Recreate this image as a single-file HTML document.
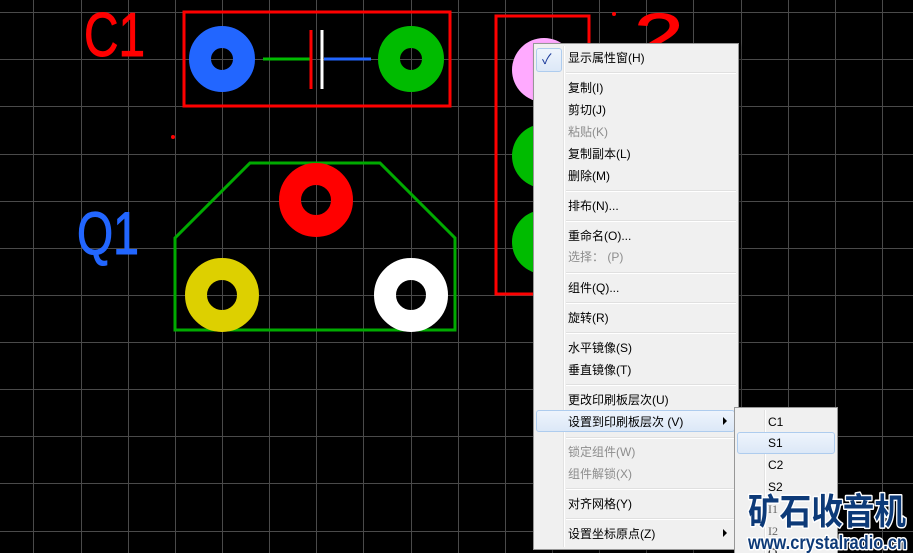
<!DOCTYPE html>
<html><head><meta charset="utf-8"><style>
html,body{margin:0;padding:0;width:913px;height:553px;overflow:hidden;}
body{background:#000;position:relative;font-family:"Liberation Sans","Noto Sans CJK SC",sans-serif;}
svg.bg{position:absolute;left:0;top:0;}
.menu{position:absolute;left:533px;top:43px;width:204px;height:505px;background:#f0f0f0;border:1px solid #979797;box-shadow:2px 2px 3px rgba(0,0,0,.5);}
.menu .gut{position:absolute;left:29px;top:2px;bottom:2px;width:1px;background:#e2e2e2;border-right:1px solid #fff;}
.it{position:absolute;left:34px;font-size:12px;color:#000;line-height:14px;white-space:nowrap;}
.dis{color:#8d8d8d;}
.sep{position:absolute;left:32px;right:2px;height:1px;background:#e0e0e0;border-bottom:1px solid #fff;}
.hl{position:absolute;border:1px solid #aeccee;border-radius:3px;background:linear-gradient(#eef4fc,#dce8f7);}
.sub{position:absolute;left:734px;top:407px;width:102px;height:146px;background:#f0f0f0;border:1px solid #979797;border-bottom:none;overflow:hidden;}
.sit{position:absolute;left:33px;font-size:12px;line-height:14px;color:#000;font-family:"Liberation Sans",sans-serif;}
svg.wm{position:absolute;left:0;top:0;}
</style></head><body>
<svg class="bg" width="913" height="553">
<g stroke="#4a4a4a" stroke-width="1">
<line x1="33.5" y1="0" x2="33.5" y2="553"/><line x1="81.5" y1="0" x2="81.5" y2="553"/><line x1="128.5" y1="0" x2="128.5" y2="553"/><line x1="175.5" y1="0" x2="175.5" y2="553"/><line x1="222.5" y1="0" x2="222.5" y2="553"/><line x1="269.5" y1="0" x2="269.5" y2="553"/><line x1="316.5" y1="0" x2="316.5" y2="553"/><line x1="363.5" y1="0" x2="363.5" y2="553"/><line x1="411.5" y1="0" x2="411.5" y2="553"/><line x1="458.5" y1="0" x2="458.5" y2="553"/><line x1="505.5" y1="0" x2="505.5" y2="553"/><line x1="552.5" y1="0" x2="552.5" y2="553"/><line x1="599.5" y1="0" x2="599.5" y2="553"/><line x1="646.5" y1="0" x2="646.5" y2="553"/><line x1="693.5" y1="0" x2="693.5" y2="553"/><line x1="741.5" y1="0" x2="741.5" y2="553"/><line x1="788.5" y1="0" x2="788.5" y2="553"/><line x1="835.5" y1="0" x2="835.5" y2="553"/><line x1="882.5" y1="0" x2="882.5" y2="553"/>
<line x1="0" y1="12.5" x2="913" y2="12.5"/><line x1="0" y1="59.5" x2="913" y2="59.5"/><line x1="0" y1="106.5" x2="913" y2="106.5"/><line x1="0" y1="154.5" x2="913" y2="154.5"/><line x1="0" y1="201.5" x2="913" y2="201.5"/><line x1="0" y1="248.5" x2="913" y2="248.5"/><line x1="0" y1="295.5" x2="913" y2="295.5"/><line x1="0" y1="342.5" x2="913" y2="342.5"/><line x1="0" y1="389.5" x2="913" y2="389.5"/><line x1="0" y1="436.5" x2="913" y2="436.5"/><line x1="0" y1="483.5" x2="913" y2="483.5"/><line x1="0" y1="531.5" x2="913" y2="531.5"/>
</g>
<text x="84" y="56" font-family="Liberation Sans" font-size="62" fill="#ff0000" stroke="#ff0000" stroke-width="1" textLength="61" lengthAdjust="spacingAndGlyphs">C1</text>
<rect x="184" y="12" width="266" height="94" fill="none" stroke="#ff0000" stroke-width="3"/>
<line x1="263" y1="59" x2="310" y2="59" stroke="#00bb00" stroke-width="3"/>
<line x1="324" y1="59" x2="371" y2="59" stroke="#2266ff" stroke-width="3"/>
<line x1="311" y1="30" x2="311" y2="89" stroke="#ff0000" stroke-width="3"/>
<line x1="322" y1="30" x2="322" y2="89" stroke="#ffffff" stroke-width="3"/>
<circle cx="222" cy="59" r="22" fill="none" stroke="#2266ff" stroke-width="22"/>
<circle cx="411" cy="59" r="22" fill="none" stroke="#00bb00" stroke-width="22"/>
<circle cx="173" cy="137" r="2" fill="#ff0000"/>
<polygon points="175,330 175,238 250,163 380,163 455,238 455,330" fill="none" stroke="#00aa00" stroke-width="3"/>
<circle cx="316" cy="200" r="26" fill="none" stroke="#ff0000" stroke-width="22"/>
<circle cx="222" cy="295" r="26" fill="none" stroke="#ddd000" stroke-width="22"/>
<circle cx="411" cy="295" r="26" fill="none" stroke="#ffffff" stroke-width="22"/>
<text x="77" y="254" font-family="Liberation Sans" font-size="60" fill="#2266ff" stroke="#2266ff" stroke-width="1" textLength="62" lengthAdjust="spacingAndGlyphs">Q1</text>
<rect x="496" y="16" width="93" height="278" fill="none" stroke="#ff0000" stroke-width="3"/>
<circle cx="544" cy="70" r="32" fill="#ffaaff"/>
<circle cx="544" cy="156" r="32" fill="#00bb00"/>
<circle cx="544" cy="242" r="32" fill="#00bb00"/>
<circle cx="614" cy="14" r="2" fill="#ff0000"/>
<text transform="translate(634,58) scale(1.4,1)" font-family="Liberation Sans" font-size="64" fill="#ff0000" stroke="#ff0000" stroke-width="1">2</text>
</svg>
<div class="menu">
<div class="gut"></div>
<div class="hl" style="left:2px;top:4px;width:24px;height:22px;"></div>
<div style="position:absolute;left:8px;top:5px;font-size:14px;color:#1a3a9a;">✓</div>
<div class="it" style="top:7px">显示属性窗(H)</div>
<div class="sep" style="top:28px"></div>
<div class="it" style="top:37px">复制(I)</div>
<div class="it" style="top:59px">剪切(J)</div>
<div class="it dis" style="top:81px">粘贴(K)</div>
<div class="it" style="top:103px">复制副本(L)</div>
<div class="it" style="top:125px">删除(M)</div>
<div class="sep" style="top:146px"></div>
<div class="it" style="top:155px">排布(N)...</div>
<div class="sep" style="top:176px"></div>
<div class="it" style="top:185px">重命名(O)...</div>
<div class="it dis" style="top:206px">选择： (P)</div>
<div class="sep" style="top:228px"></div>
<div class="it" style="top:237px">组件(Q)...</div>
<div class="sep" style="top:258px"></div>
<div class="it" style="top:267px">旋转(R)</div>
<div class="sep" style="top:288px"></div>
<div class="it" style="top:297px">水平镜像(S)</div>
<div class="it" style="top:319px">垂直镜像(T)</div>
<div class="sep" style="top:340px"></div>
<div class="it" style="top:349px">更改印刷板层次(U)</div>
<div class="hl" style="left:2px;top:366px;width:197px;height:20px;"></div>
<div class="it" style="top:371px">设置到印刷板层次 (V)</div>
<div style="position:absolute;left:189px;top:373px;width:0;height:0;border-left:4px solid #000;border-top:4px solid transparent;border-bottom:4px solid transparent;"></div>
<div class="sep" style="top:393px"></div>
<div class="it dis" style="top:401px">锁定组件(W)</div>
<div class="it dis" style="top:423px">组件解锁(X)</div>
<div class="sep" style="top:444px"></div>
<div class="it" style="top:453px">对齐网格(Y)</div>
<div class="sep" style="top:474px"></div>
<div class="it" style="top:483px">设置坐标原点(Z)</div>
<div style="position:absolute;left:189px;top:485px;width:0;height:0;border-left:4px solid #000;border-top:4px solid transparent;border-bottom:4px solid transparent;"></div>
</div>
<div class="sub">
<div style="position:absolute;left:29px;top:2px;bottom:0;width:1px;background:#e2e2e2;border-right:1px solid #fff;"></div>
<div class="sit" style="top:7px">C1</div>
<div class="hl" style="left:2px;top:24px;width:96px;height:20px;"></div>
<div class="sit" style="top:28px">S1</div>
<div class="sit" style="top:50px">C2</div>
<div class="sit" style="top:72px">S2</div>
<div class="sit" style="top:94px;color:#666;font-family:'Liberation Serif',serif">I1</div>
<div class="sit" style="top:116px;color:#666;font-family:'Liberation Serif',serif">I2</div>
<div class="sit" style="top:138px">O</div>
</div>
<svg class="wm" width="913" height="553">
<g fill="#0d3a78" stroke="#fff" stroke-width="3" paint-order="stroke" stroke-linejoin="round" font-weight="bold">
<text x="748" y="524" font-family="Noto Sans CJK SC, sans-serif" font-size="36" textLength="158" lengthAdjust="spacingAndGlyphs">矿石收音机</text>
<text x="748" y="549" font-family="Liberation Sans, sans-serif" font-size="19" textLength="159" lengthAdjust="spacingAndGlyphs">www.crystalradio.cn</text>
</g>
</svg>
</body></html>
